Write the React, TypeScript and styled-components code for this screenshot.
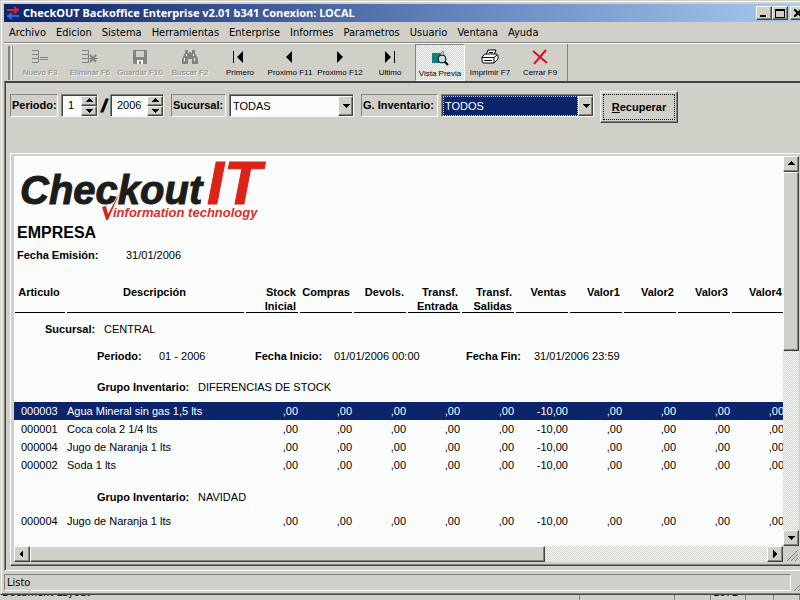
import React from "react";
import styled, { createGlobalStyle, css } from "styled-components";

const GlobalStyle = createGlobalStyle`
  * { box-sizing: border-box; }
  body {
    margin: 0;
    overflow: hidden;
    background: #d0d0c9;
    color: #000;
    font: 11px/18px "Liberation Sans", Arial, sans-serif;
  }
  button, input, select { font: inherit; color: inherit; }
`;

const face = "#d0d0c9";
const shade = "#84847e";
const dark = "#42423f";
const light = "#fbfdfa";
const navy = "#0b246a";
const paper = "#f9fcfb";

const raised = css`
  background: ${face};
  border: 1px solid;
  border-color: ${light} ${dark} ${dark} ${light};
  box-shadow: inset -1px -1px 0 ${shade};
`;

const sunken = css`
  border: 1px solid;
  border-color: ${shade} ${light} ${light} ${shade};
  box-shadow: inset 1px 1px 0 ${dark};
`;

const Screen = styled.div`
  display: flex;
  flex-direction: column;
  height: 100vh;
`;

const Window = styled.div`
  flex: 1;
  min-height: 0;
  display: flex;
  flex-direction: column;
  border-top: 1px solid ${face};
  border-left: 1px solid ${face};
  border-bottom: 1px solid ${dark};
  box-shadow: inset 1px 1px 0 ${light}, inset 0 -1px 0 ${shade};
  padding: 3px 0 3px 3px;
`;

const TitleBar = styled.header`
  height: 18px;
  display: flex;
  align-items: center;
  gap: 3px;
  padding-left: 2px;
  background: linear-gradient(90deg, #0b246a 0%, #6d8cc4 62%, #a6caf0 100%);
`;

const Title = styled.h1`
  flex: 1;
  margin: 0;
  color: #fff;
  white-space: nowrap;
  font: bold 11px/18px "Noto Sans", Tahoma, sans-serif;
`;

const Caption = styled.button<{ $last?: boolean }>`
  ${raised}
  width: 16px;
  height: 14px;
  padding: 0;
  display: flex;
  justify-content: center;
  align-items: center;
  flex: none;
  margin: ${(p) => (p.$last ? "0 -6px 0 -1px" : "0 0 0 -3px")};
`;

const MenuBar = styled.nav`
  height: 21px;
  display: flex;
  align-items: flex-end;
  gap: 10px;
  padding-left: 5px;
  border-bottom: 1px solid ${shade};
`;

const MenuItem = styled.button`
  border: 0;
  padding: 0;
  background: none;
  white-space: nowrap;
  font: 11px/18px "DejaVu Sans Condensed", Tahoma, sans-serif;
`;

const ToolBar = styled.div`
  height: 38px;
  display: flex;
  border-top: 1px solid ${light};
  padding-left: 4px;
`;

const Grip = styled.span`
  width: 5px;
  margin: 2px 2px 1px 0;
  border: solid;
  border-width: 0 1px;
  border-color: ${light} ${shade};
  box-shadow: inset 1px 0 0 ${shade}, inset -1px 0 0 ${light};
`;

const Tools = styled.div`
  display: flex;
  padding-right: 2px;
  border-right: 1px solid ${shade};
`;

const Tool = styled.button`
  width: 50px;
  display: flex;
  flex-direction: column;
  align-items: center;
  gap: 3px;
  padding: 4px 0 0;
  border: 1px solid transparent;
  background: none;
  white-space: nowrap;
  font-size: 8px;
  line-height: 9px;
  &:disabled { color: ${shade}; text-shadow: 1px 1px 0 ${light}; }
  &[aria-pressed="true"] {
    background: repeating-conic-gradient(${light} 0 25%, ${face} 0 50%) 0 0 / 2px 2px;
    border-color: ${shade} ${light} ${light} ${shade};
    padding-top: 5px;
  }
`;

const Workspace = styled.main`
  flex: 1;
  min-height: 0;
  display: flex;
  flex-direction: column;
  border: solid;
  border-width: 1px 0 1px 1px;
  border-color: ${dark} ${light} ${light} ${shade};
  box-shadow: inset 1px 1px 0 ${dark};
  padding: 11px 0 4px 5px;
`;

const Filters = styled.form`
  height: 60px;
  display: flex;
  align-items: flex-start;
`;

const Tag = styled.label<{ $w: number }>`
  width: ${(p) => p.$w}px;
  height: 23px;
  margin: 1px 3px 0 0;
  padding: 0 1px;
  border: 1px solid;
  border-color: ${shade} ${light} ${light} ${shade};
  font-weight: bold;
  line-height: 20px;
  white-space: nowrap;
`;

const Field = styled.span<{ $w: number }>`
  ${sunken}
  width: ${(p) => p.$w}px;
  height: 23px;
  margin-top: 1px;
  padding: 1px 0 0 1px;
  display: flex;
  background: ${paper};
`;

const NumberBox = styled.input`
  flex: 1;
  min-width: 0;
  border: 0;
  outline: 0;
  padding: 0 0 2px 5px;
  background: none;
`;

const Spinner = styled.span`
  width: 16px;
  display: flex;
  flex-direction: column;
`;

const Arrow = styled.button`
  ${raised}
  flex: 1;
  min-height: 0;
  display: flex;
  align-items: center;
  justify-content: center;
  padding: 0;
`;

const Slash = styled.strong`
  width: 12px;
  text-align: center;
  font-size: 18px;
  font-style: italic;
  line-height: 26px;
  -webkit-text-stroke: 1px #000;
`;

const Combo = styled.select<{ $active?: boolean }>`
  appearance: none;
  flex: 1;
  min-width: 0;
  border: 1px ${(p) => (p.$active ? "dotted #d9c977" : "solid transparent")};
  border-radius: 0;
  outline: 0;
  padding: 0 2px 1px 1px;
  background: ${(p) => (p.$active ? navy : "transparent")};
  color: ${(p) => (p.$active ? "#fff" : "#000")};
`;

const Drop = styled.span`
  ${raised}
  width: 15px;
  display: flex;
  align-items: center;
  justify-content: center;
`;

const Gap = styled.span<{ $w: number }>`
  width: ${(p) => p.$w}px;
`;

const Recover = styled.button`
  ${raised}
  width: 78px;
  height: 32px;
  margin-top: -2px;
  padding: 2px;
  font-weight: bold;
  span { display: block; border: 1px dotted #000; line-height: 24px; }
`;

const Viewer = styled.section`
  flex: 1;
  min-height: 0;
  display: grid;
  grid-template-columns: minmax(0, 1fr) 16px;
  grid-template-rows: minmax(0, 1fr) 16px;
  border: solid;
  border-width: 1px 0 1px 1px;
  border-color: ${light} ${dark} ${dark} ${light};
  padding: 2px 1px 3px 3px;
  box-shadow: inset 0 -1px 0 ${shade};
`;

const Page = styled.article`
  overflow: hidden;
  background: ${paper};
  padding-top: 4px;
`;

const Company = styled.h2`
  margin: 0 0 3px 3px;
  font: bold 16px/20px "Liberation Sans", Arial, sans-serif;
`;

const Issued = styled.p`
  margin: 0 0 21px 3px;
  line-height: 18px;
  display: flex;
  b { width: 109px; }
`;

const Report = styled.table`
  width: 771px;
  table-layout: fixed;
  border-collapse: collapse;
  td, th { padding: 0 1px; white-space: nowrap; }
`;

const Head = styled.th<{ $center?: boolean }>`
  text-align: ${(p) => (p.$center ? "center" : "right")};
  vertical-align: top;
  line-height: 14px;
  span {
    display: block;
    height: 28px;
    padding-right: 2px;
    border-bottom: 1px solid #000;
    white-space: pre;
  }
`;

const Line = styled.tr<{ $selected?: boolean }>`
  height: 18px;
  background: ${(p) => (p.$selected ? navy : "none")};
  color: ${(p) => (p.$selected ? "#fff" : "#000")};
  td { text-align: right; }
  td:first-child { text-align: left; padding-left: 7px; }
  td:nth-child(2) { text-align: left; }
`;

const Band = styled.div<{ $pad: string; $cols: string }>`
  display: grid;
  grid-template-columns: ${(p) => p.$cols};
  padding: ${(p) => p.$pad};
`;

const Track = styled.div<{ $row?: boolean }>`
  display: flex;
  flex-direction: ${(p) => (p.$row ? "row" : "column")};
  background: repeating-conic-gradient(${light} 0 25%, ${face} 0 50%) 0 0 / 2px 2px;
`;

const TrackArrow = styled(Arrow)`
  flex: none;
  width: 16px;
  height: 16px;
`;

const Thumb = styled.span<{ $size: string }>`
  ${raised}
  flex: 0 0 ${(p) => p.$size};
`;

const Spacer = styled.span`
  flex: 1;
`;

const Status = styled.footer`
  display: flex;
  align-items: flex-end;
  height: 20px;
`;

const StatusText = styled.p`
  flex: 1;
  margin: 0;
  height: 17px;
  padding-left: 2px;
  border: 1px solid;
  border-color: ${shade} ${light} ${light} ${shade};
  font: 11px/15px "DejaVu Sans Condensed", Tahoma, sans-serif;
`;

const Behind = styled.div`
  height: 5px;
  overflow: hidden;
  display: grid;
  grid-template-columns: 580fr 95fr 36fr 35fr 28fr 26fr;
  align-content: end;
  font: 11px/14px "DejaVu Sans Condensed", Tahoma, sans-serif;
`;

const BehindCell = styled.span`
  height: 14px;
  padding-left: 2px;
  border-right: 1px solid ${shade};
  white-space: nowrap;
`;

const LogoArt = styled.svg`
  display: block;
`;

const Tri = ({ dir }: { dir: "up" | "down" | "left" | "right" }) => {
  const d = { up: "M0 5L4 1L8 5Z", down: "M0 2H8L4 6Z", left: "M5 0V8L1 4Z", right: "M2 0V8L6 4Z" }[dir];
  return <svg width="8" height="8" viewBox="0 0 8 8" shapeRendering="crispEdges"><path d={d} /></svg>;
};

const Icon = ({ name }: { name: string }) => {
  const off = shade;
  const shapes: Record<string, React.ReactNode> = {
    add: <g fill="none" stroke={off}><path d="M2 1.500H8.500V5.500H2M2 9.500H8.500V5.500M2 13.500H8.500V9.500M2 5.500H8M2 9.500H8M10 8.500H18M10 10.500H18" /></g>,
    del: <g fill="none" stroke={off}><path d="M2 1.500H8.500V5.500H2M2 9.500H8.500V5.500M2 13.500H8.500V9.500M8 9.500H18" /><path strokeWidth="2" d="M10 6L16 13M16 6L10 13" /></g>,
    save: <g><path fill={off} d="M3 1H17V15H4L3 14Z" /><path fill={face} d="M6 2H14V8H6Z" /><path fill={light} d="M7 11H13V15H11V12H9V15H7Z" /></g>,
    find: <g fill={off}><path d="M5 1H8V4H9V3H11V4H12V1H15V4L18 10V15H12V10H8V15H2V10L5 4Z" /><path fill={light} d="M4 9H5V12H4ZM14 9H15V12H14ZM6 5H7V7H6ZM13 5H14V7H13Z" /></g>,
    first: <path d="M3 2H4V14H3ZM13 2V14L7 8Z" />,
    prev: <path d="M12 2V14L6 8Z" />,
    next: <path d="M7 2V14L13 8Z" />,
    last: <path d="M5 2V14L11 8ZM14 2H15V14H14Z" />,
    view: <g><path fill="#0b8282" d="M2 3H12V13H2Z" /><path fill="#fff" stroke="#607878" d="M10 5L13 1L14 6Z" /><circle cx="12" cy="9" r="4" fill="#b9dede" stroke="#000" /><path fill="none" stroke="#000" strokeWidth="2" d="M15 12L18 15" /><path stroke="#fff" d="M10 9L13 7" /></g>,
    print: <g fill="#fff" stroke="#000"><path d="M6 6L8 1H16L14 6" /><path d="M2 8L5 5H17L18 6V10L14 14H3L2 12Z" /><path fill="none" d="M2 8.500H14L17 6M14 9V14M4 11.500H12M9 3.500H13" /></g>,
    close: <path d="M3 2L17 14M16 1L4 15" stroke="#e01020" strokeWidth="2" fill="none" />,
  };
  return <svg width="20" height="16" viewBox="0 0 20 16">{shapes[name]}</svg>;
};

const tools = [
  ["add", "Nuevo F3"], ["del", "Eliminar F6"], ["save", "Guardar F10"], ["find", "Buscar F2"],
  ["first", "Primero"], ["prev", "Proximo F11"], ["next", "Proximo F12"], ["last", "Ultimo"],
  ["view", "Vista Previa"], ["print", "Imprimir F7"], ["close", "Cerrar F9"],
];
const menus = ["Archivo", "Edicion", "Sistema", "Herramientas", "Enterprise", "Informes", "Parametros", "Usuario", "Ventana", "Ayuda"];
const heads = ["Articulo", "Descripción", "Stock\nInicial", "Compras", "Devols.", "Transf.\nEntrada", "Transf.\nSalidas", "Ventas", "Valor1", "Valor2", "Valor3", "Valor4"];
const amounts = [",00", ",00", ",00", ",00", ",00", "-10,00", ",00", ",00", ",00", ",00"];
const groups = [
  { name: "DIFERENCIAS DE STOCK", items: [["000003", "Agua Mineral sin gas 1,5 lts"], ["000001", "Coca cola 2 1/4 lts"], ["000004", "Jugo de Naranja 1 lts"], ["000002", "Soda 1 lts"]] },
  { name: "NAVIDAD", items: [["000004", "Jugo de Naranja 1 lts"]] },
];

const Logo = () => (
  <LogoArt width="260" height="63" viewBox="0 0 260 63" role="img" aria-label="Checkout IT information technology">
    <g fontWeight="bold" fontStyle="italic" fontFamily="'Liberation Sans', Arial, sans-serif">
      <text x="6" y="44" fontSize="40" fill="#1c1c1a" stroke="#1c1c1a">Checkout</text>
      <text x="193" y="44" fontSize="61" fill="#dc2318" stroke="#dc2318">IT</text>
      <text x="99" y="57" fontSize="13" fill="#d8302a">information technology</text>
    </g>
    <path d="M88 47L92 46L94 54L106 32L94 60H92Z" fill="#dc2318" />
  </LogoArt>
);

const Spin = ({ id, label, value, w }: { id: string; label: string; value: string; w: number }) => (
  <Field $w={w}>
    <NumberBox id={id} aria-label={label} defaultValue={value} />
    <Spinner>
      <Arrow type="button" aria-label={`${label} +`}><Tri dir="up" /></Arrow>
      <Arrow type="button" aria-label={`${label} -`}><Tri dir="down" /></Arrow>
    </Spinner>
  </Field>
);

export default function App() {
  return (
    <Screen>
      <GlobalStyle />
      <Window>
        <TitleBar>
          <svg width="14" height="14" viewBox="0 0 14 14">
            <path d="M1 4H10M8 1L12 4L8 7" fill="none" stroke="#e02030" strokeWidth="2" />
            <path d="M3 10H13M6 7L2 10L6 13" fill="none" stroke="#3868d8" strokeWidth="2" />
          </svg>
          <Title>CheckOUT Backoffice Enterprise v2.01 b341 Conexion: LOCAL</Title>
          <Caption aria-label="Minimizar"><svg width="10" height="8"><path d="M1 6H7V8H1Z" /></svg></Caption>
          <Caption aria-label="Maximizar"><svg width="10" height="9"><path d="M0 0H10V9H0ZM1 2V8H9V2Z" fillRule="evenodd" /></svg></Caption>
          <Caption $last aria-label="Cerrar"><svg width="8" height="8"><path d="M0 0L8 8M8 0L0 8" stroke="#000" strokeWidth="2" /></svg></Caption>
        </TitleBar>
        <MenuBar>{menus.map((m) => <MenuItem key={m}>{m}</MenuItem>)}</MenuBar>
        <ToolBar>
          <Grip />
          <Tools>
            {tools.map(([icon, label], i) => (
              <Tool key={label} disabled={i < 4} aria-pressed={icon === "view" ? true : undefined}>
                <Icon name={icon} />{label}
              </Tool>
            ))}
          </Tools>
        </ToolBar>
        <Workspace>
          <Filters>
            <Tag $w={48} htmlFor="month">Periodo:</Tag>
            <Spin id="month" label="Mes" value="1" w={37} />
            <Slash>/</Slash>
            <Spin id="year" label="Año" value="2006" w={54} />
            <Gap $w={7} />
            <Tag $w={55} htmlFor="branch">Sucursal:</Tag>
            <Field $w={125}>
              <Combo id="branch"><option>TODAS</option></Combo>
              <Drop><Tri dir="down" /></Drop>
            </Field>
            <Gap $w={7} />
            <Tag $w={77} htmlFor="group">G. Inventario:</Tag>
            <Field $w={153}>
              <Combo id="group" $active><option>TODOS</option></Combo>
              <Drop><Tri dir="down" /></Drop>
            </Field>
            <Gap $w={6} />
            <Recover type="button"><span><u>R</u>ecuperar</span></Recover>
          </Filters>
          <Viewer>
            <Page>
              <Logo />
              <Company>EMPRESA</Company>
              <Issued><b>Fecha Emisión:</b>31/01/2006</Issued>
              <Report>
                <colgroup>
                  <col width="52" /><col width="179" />
                  {amounts.map((_, i) => <col key={i} width="54" />)}
                </colgroup>
                <thead><tr>{heads.map((h, i) => <Head key={h} $center={i < 2}><span>{h}</span></Head>)}</tr></thead>
                <tbody>
                  <tr><td colSpan={12}><Band $pad="7px 0 9px 30px" $cols="59px 1fr"><b>Sucursal:</b><span>CENTRAL</span></Band></td></tr>
                  <tr><td colSpan={12}>
                    <Band $pad="0 0 0 82px" $cols="62px 96px 79px 132px 68px 1fr">
                      <b>Periodo:</b><span>01 - 2006</span>
                      <b>Fecha Inicio:</b><span>01/01/2006 00:00</span>
                      <b>Fecha Fin:</b><span>31/01/2006 23:59</span>
                    </Band>
                  </td></tr>
                  {groups.map((g, gi) => (
                    <React.Fragment key={g.name}>
                      <tr><td colSpan={12}><Band $pad={gi ? "14px 0 6px 82px" : "13px 0 6px 82px"} $cols="101px 1fr"><b>Grupo Inventario:</b><span>{g.name}</span></Band></td></tr>
                      {g.items.map(([code, name], i) => (
                        <Line key={code} $selected={gi === 0 && i === 0}>
                          <td>{code}</td><td>{name}</td>
                          {amounts.map((a, k) => <td key={k}>{a}</td>)}
                        </Line>
                      ))}
                    </React.Fragment>
                  ))}
                </tbody>
              </Report>
            </Page>
            <Track>
              <TrackArrow aria-label="Subir"><Tri dir="up" /></TrackArrow>
              <Thumb $size="46%" />
              <Spacer />
              <TrackArrow aria-label="Bajar"><Tri dir="down" /></TrackArrow>
            </Track>
            <Track $row>
              <TrackArrow aria-label="Izquierda"><Tri dir="left" /></TrackArrow>
              <Thumb $size="67%" />
              <Spacer />
              <TrackArrow aria-label="Derecha"><Tri dir="right" /></TrackArrow>
            </Track>
            <svg width="16" height="16"><path d="M4 15L15 4M8 15L15 8M12 15L15 12" stroke={shade} /></svg>
          </Viewer>
        </Workspace>
        <Status>
          <StatusText>Listo</StatusText>
          <svg width="9" height="17"><path d="M3 17L9 11M7 17L9 15" stroke={shade} /></svg>
        </Status>
      </Window>
      <Behind>
        {["Document Layout", "", "", "1672", "", ""].map((t, i) => <BehindCell key={i}>{t}</BehindCell>)}
      </Behind>
    </Screen>
  );
}
